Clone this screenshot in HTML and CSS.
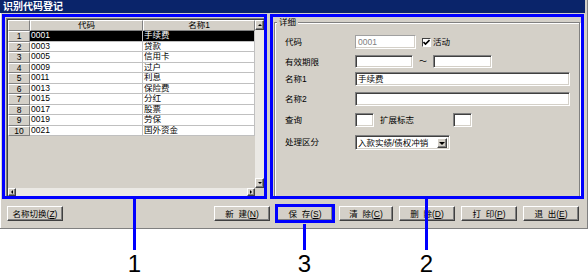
FILE: index.html
```html
<!DOCTYPE html>
<html lang="zh-CN">
<head>
    <meta charset="UTF-8">
    <title>识别代码登记</title>
    <link rel="stylesheet" href="styles.css">
</head>
<body>
    <div class="window">
        <div class="titlebar">识别代码登记</div>

        <div class="panels">
            <!-- 1: 代码一览 -->
            <div class="mark list-mark">
                <div class="grid">
                    <div class="grid-body">
                        <div class="grid-main">
                            <div class="codes">
                                <div class="hd"></div><div class="hd">代码</div><div class="hd">名称1</div>

                                <div class="num">1</div><div class="cell sel">0001</div><div class="cell sel">手续费</div>
                                <div class="num">2</div><div class="cell">0003</div><div class="cell">贷款</div>
                                <div class="num">3</div><div class="cell">0005</div><div class="cell">信用卡</div>
                                <div class="num">4</div><div class="cell">0009</div><div class="cell">过户</div>
                                <div class="num">5</div><div class="cell">0011</div><div class="cell">利息</div>
                                <div class="num">6</div><div class="cell">0013</div><div class="cell">保险费</div>
                                <div class="num">7</div><div class="cell">0015</div><div class="cell">分红</div>
                                <div class="num">8</div><div class="cell">0017</div><div class="cell">股票</div>
                                <div class="num">9</div><div class="cell">0019</div><div class="cell">劳保</div>
                                <div class="num">10</div><div class="cell">0021</div><div class="cell">国外资金</div>
                            </div>
                            <div class="vscroll">
                                <span class="sbtn"><span class="tri up"></span></span>
                                <span class="track"></span>
                                <span class="sbtn"><span class="tri down"></span></span>
                            </div>
                        </div>
                        <div class="hscroll">
                            <span class="sbtn"><span class="tri left"></span></span>
                            <span class="track"></span>
                            <span class="sbtn"><span class="tri right"></span></span>
                            <span class="corner"></span>
                        </div>
                    </div>
                </div>
            </div>

            <!-- 2: 详细 -->
            <div class="mark detail-mark">
                <fieldset class="detail">
                    <legend>详细</legend>
                    <div class="form">
                        <label>代码</label>
                        <div class="field">
                            <span class="input disabled w61">0001</span>
                            <span class="check">
                                <svg width="7" height="7" viewBox="0 0 7 7"><path d="M0.5 3 L2.5 5 L6.5 1" fill="none" stroke="#000" stroke-width="1.6"/></svg>
                            </span>
                            <span class="check-label">活动</span>
                        </div>

                        <label>有效期限</label>
                        <div class="field">
                            <span class="input short w58"></span>
                            <span class="tilde">～</span>
                            <span class="input short w59"></span>
                        </div>

                        <label>名称1</label>
                        <div class="field"><span class="input w215">手续费</span></div>

                        <label>名称2</label>
                        <div class="field"><span class="input w215"></span></div>

                        <label>查询</label>
                        <div class="field">
                            <span class="input w19"></span>
                            <span class="sub-label">扩展标志</span>
                            <span class="input w19"></span>
                        </div>

                        <label>处理区分</label>
                        <div class="field">
                            <span class="select">
                                <span class="select-text">入款实绩/债权冲销</span>
                                <span class="drop"><span class="tri down"></span></span>
                            </span>
                        </div>
                    </div>
                </fieldset>
            </div>
        </div>

        <div class="actions">
            <button class="btn btn-switch">名称切换(<u>Z</u>)</button>
            <button class="btn">新&nbsp;&nbsp;建(<u>N</u>)</button>
            <button class="btn marked">保&nbsp;&nbsp;存(<u>S</u>)</button>
            <button class="btn narrow">清&nbsp;&nbsp;除(<u>C</u>)</button>
            <button class="btn">删&nbsp;&nbsp;除(<u>D</u>)</button>
            <button class="btn">打&nbsp;&nbsp;印(<u>P</u>)</button>
            <button class="btn">退&nbsp;&nbsp;出(<u>E</u>)</button>
        </div>
    </div>

    <!-- 说明编号 -->
    <div class="callout c1"><span class="line"></span><span class="no">1</span></div>
    <div class="callout c3"><span class="line"></span><span class="no">3</span></div>
    <div class="callout c2"><span class="line"></span><span class="no">2</span></div>
</body>
</html>
```

FILE: styles.css
```css
* {
    box-sizing: border-box;
}

body {
    margin: 0;
    width: 588px;
    height: 279px;
    overflow: hidden;
    position: relative;
    background: #fff;
    color: #000;
    font-family: "Liberation Sans", "Noto Sans CJK SC", sans-serif;
    font-size: 8.5px;
}

.window {
    width: 588px;
    height: 229px;
    background: #d4d0c8;
    border-bottom: 1px solid #808080;
    box-shadow: inset 1px 0 #fff, inset -1px 0 #808080;
}

.titlebar {
    height: 13px;
    margin-right: 3px;
    padding-left: 3px;
    background: #0a246a;
    color: #fff;
    font-size: 10px;
    font-weight: bold;
    line-height: 13px;
}

.panels {
    display: flex;
    gap: 3px;
    height: 186px;
    padding: 1px 0 0 2px;
}

.mark {
    height: 185px;
    border: 3px solid #0000ff;
}

.list-mark {
    width: 265px;
}

.detail-mark {
    width: 314px;
    overflow: hidden;
}

/* grid */
.grid {
    height: 178px;
    margin: 1px 0 0 1px;
    border-top: 1px solid #808080;
    border-left: 1px solid #808080;
}

.grid-body {
    height: 100%;
    display: flex;
    flex-direction: column;
    border-top: 1px solid #404040;
    border-left: 1px solid #404040;
}

.grid-main {
    flex: 1;
    display: flex;
}

.codes {
    width: 247px;
    display: grid;
    grid-template-columns: 22px 113px 112px;
    grid-template-rows: 11px;
    grid-auto-rows: 10.5px;
    align-content: start;
}

.codes .hd,
.codes .num {
    background: #d4d0c8;
    border: 1px solid;
    border-color: #fff #808080 #808080 #fff;
    text-align: center;
    line-height: 9px;
    overflow: hidden;
}

.codes .cell {
    background: #fff;
    border-right: 1px solid #c0c0c0;
    border-bottom: 1px solid #c0c0c0;
    padding-left: 1px;
    line-height: 9.5px;
    white-space: nowrap;
    overflow: hidden;
}

.codes .cell.sel {
    background: #000;
    color: #fff;
}

.vscroll {
    width: 9px;
    display: flex;
    flex-direction: column;
}

.vscroll .sbtn {
    height: 10px;
}

.hscroll {
    height: 8px;
    display: flex;
}

.hscroll .sbtn {
    width: 8px;
}

.track {
    flex: 1;
    background: #ebe9e5;
}

.corner {
    width: 9px;
    background: #d4d0c8;
}

.sbtn {
    display: flex;
    align-items: center;
    justify-content: center;
    background: #d4d0c8;
    border: 1px solid;
    border-color: #fff #404040 #404040 #fff;
    box-shadow: inset -1px -1px #808080;
}

.tri {
    width: 0;
    height: 0;
    border: 2px solid transparent;
}

.tri.up {
    border-top: 0;
    border-bottom: 2px solid #000;
}

.tri.down {
    border-bottom: 0;
    border-top: 2px solid #000;
}

.tri.left {
    border-left: 0;
    border-right: 2px solid #000;
}

.tri.right {
    border-right: 0;
    border-left: 2px solid #000;
}

/* detail */
.detail {
    height: 190px;
    margin: 0 1px;
    padding: 0;
    min-width: 0;
    border: 1px solid #808080;
    box-shadow: inset 1px 1px #fff, 1px 1px #fff;
}

.detail legend {
    margin-left: 2px;
    padding: 0 2px;
    background: #d4d0c8;
    line-height: 10px;
}

.form {
    display: grid;
    grid-template-columns: 70px 1fr;
    grid-template-rows: 20px 17px 20px 21px 22px 15px;
    padding: 8px 0 0 10px;
}

.form label {
    line-height: 14px;
}

.field {
    display: flex;
    align-items: flex-start;
}

.input {
    height: 14px;
    padding: 0 2px;
    background: #fff;
    border: 1px solid;
    border-color: #808080 #fff #fff #808080;
    box-shadow: inset 1px 1px #404040, inset -1px -1px #d4d0c8;
    line-height: 12px;
    white-space: nowrap;
}

.input.short {
    height: 13px;
}

.input.disabled {
    color: #808080;
    box-shadow: inset -1px -1px #d4d0c8;
    border-color: #a0a0a0 #fff #fff #a0a0a0;
}

.w19 { width: 19px; }
.w58 { width: 58px; }
.w59 { width: 59px; }
.w61 { width: 61px; }
.w215 { width: 215px; }

.check {
    width: 9px;
    height: 9px;
    margin: 3px 0 0 6px;
    display: flex;
    align-items: center;
    justify-content: center;
    background: #fff;
    border-top: 1px solid #404040;
    border-left: 1px solid #404040;
    border-right: 1px solid #fff;
    border-bottom: 1px solid #fff;
}

.check-label {
    margin-left: 2px;
    line-height: 14px;
}

.tilde {
    width: 20px;
    text-align: center;
    font-size: 8px;
    line-height: 14px;
}

.sub-label {
    width: 79px;
    padding-left: 6px;
    line-height: 14px;
}

.select {
    width: 95px;
    height: 15px;
    display: flex;
    padding: 2px;
    background: #fff;
    border: 1px solid;
    border-color: #808080 #fff #fff #808080;
    box-shadow: inset 1px 1px #404040, inset -1px -1px #d4d0c8;
}

.select-text {
    flex: 1;
    line-height: 10px;
    white-space: nowrap;
    overflow: hidden;
}

.drop {
    width: 10px;
    height: 10px;
    display: flex;
    align-items: center;
    justify-content: center;
    background: #d4d0c8;
    border: 1px solid;
    border-color: #fff #404040 #404040 #fff;
    box-shadow: inset -1px -1px #808080;
}

.drop .tri {
    border-width: 3px;
    border-bottom: 0;
}

/* buttons */
.actions {
    display: flex;
    gap: 6px;
    padding: 7px 9px 0 7px;
}

.btn {
    width: 56px;
    height: 15px;
    padding: 0;
    background: #d4d0c8;
    border: 1px solid;
    border-color: #fff #404040 #404040 #fff;
    box-shadow: inset -1px -1px #808080;
    font: inherit;
    color: #000;
    line-height: 12px;
    text-align: center;
    white-space: nowrap;
}

.btn.narrow {
    width: 54px;
}

.btn-switch {
    margin-right: auto;
}

.btn.marked {
    margin-left: 1px;
    outline: 3px solid #0000ff;
    outline-offset: -1px;
}

/* callouts */
.callout {
    position: absolute;
    width: 20px;
    display: flex;
    flex-direction: column;
    align-items: center;
}

.callout .line {
    width: 3px;
    background: #0000ff;
}

.callout .no {
    margin-top: 2px;
    font-size: 24px;
    line-height: 24px;
}

.c1 { left: 124.5px; top: 199px; }
.c1 .line { height: 51px; }

.c2 { left: 416.5px; top: 199px; }
.c2 .line { height: 51px; }

.c3 { left: 294.5px; top: 224px; }
.c3 .line { height: 26px; }
```
